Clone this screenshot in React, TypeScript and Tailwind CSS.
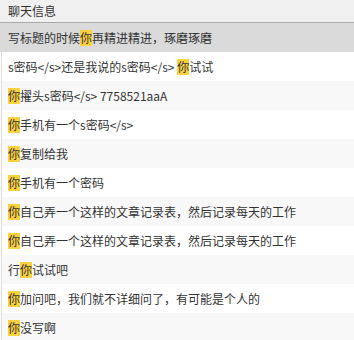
const HL = "你";

const ROWS = [
  "写标题的时候你再精进精进，琢磨琢磨",
  "s密码</s>还是我说的s密码</s> 你试试",
  "你擢头s密码</s> 7758521aaA",
  "你手机有一个s密码</s>",
  "你复制给我",
  "你手机有一个密码",
  "你自己弄一个这样的文章记录表，然后记录每天的工作",
  "你自己弄一个这样的文章记录表，然后记录每天的工作",
  "行你试试吧",
  "你加问吧，我们就不详细问了，有可能是个人的",
  "你没写啊",
];

// Split text on the search term and paint each hit yellow.
function Highlighted({ text }: { text: string }) {
  const parts = text.split(HL);
  return (
    <>
      {parts.map((p, i) => (
        <span key={i}>
          {p}
          {i < parts.length - 1 && <span className="bg-[#fbd13f] leading-[16px] inline-block">{HL}</span>}
        </span>
      ))}
    </>
  );
}

export default function App() {
  return (
    <div
      className="w-[354px] h-[340px] overflow-hidden bg-white text-[12px] text-[#333]"
      style={{ fontFamily: '"Microsoft YaHei", "Noto Sans CJK SC", sans-serif' }}
    >
      <div className="h-[23px] bg-[#f0f0f0] border-b border-[#a8a8a8] flex items-center pl-[8px] whitespace-nowrap">
        聊天信息
      </div>
      {ROWS.map((row, i) => {
        const selected = i === 0;
        const rowClass = selected
          ? "h-[29px] bg-[#dadada] flex items-center pl-[8px] whitespace-nowrap"
          : i % 2 === 1
            ? "h-[29px] ml-[1px] border-l border-[#dcdcdc] bg-white flex items-center pl-[6px] whitespace-nowrap"
            : "h-[29px] ml-[1px] border-l border-[#dcdcdc] bg-[#f8f8f8] flex items-center pl-[6px] whitespace-nowrap";
        return (
          <div key={i} className={rowClass}>
            <Highlighted text={row} />
          </div>
        );
      })}
    </div>
  );
}
